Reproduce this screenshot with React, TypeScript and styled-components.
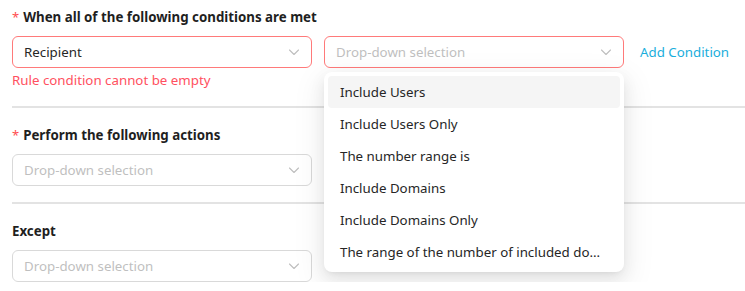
import React from "react";
import styled, { createGlobalStyle } from "styled-components";

const Global = createGlobalStyle`
  html, body { margin: 0; padding: 0; background: #fff; }
  body { font-family: "Noto Sans", "Open Sans", sans-serif; font-size: 13.3px; color: #262626; }
`;

const Page = styled.div`
  position: relative;
  padding: 6px 0 0 12px;
  width: 733px;
`;

const Section = styled.div`
  display: flex;
  flex-direction: column;
`;

const Title = styled.div`
  display: flex;
  align-items: center;
  gap: 4px;
  height: 22px;
  font-weight: 700;
  font-size: 13.3px;
  color: #1f1f1f;
  margin-bottom: 8px;
`;

const Star = styled.span`
  color: #ff4d4f;
  font-weight: 400;
  font-size: 13px;
`;

const Row = styled.div`
  display: flex;
  align-items: center;
  gap: 12px;
`;

const SelectBox = styled.div<{ $error?: boolean }>`
  box-sizing: border-box;
  width: 300px;
  height: 32px;
  border: 1px solid ${(p) => (p.$error ? "#ff7a7a" : "#d9d9d9")};
  border-radius: 6px;
  display: flex;
  align-items: center;
  justify-content: space-between;
  padding: 0 11px 0 11px;
  background: #fff;
`;

const Value = styled.span<{ $placeholder?: boolean }>`
  color: ${(p) => (p.$placeholder ? "#bfbfbf" : "#262626")};
`;

const AddLink = styled.span`
  margin-left: 4px;
  color: #1aaedc;
  white-space: nowrap;
`;

const ErrorText = styled.div`
  color: #ff5060;
  line-height: 24px;
  height: 22px;
`;

const Divider = styled.div`
  height: 2px;
  background: #e3e3e3;
  margin: 16px 0;
`;

const Menu = styled.div`
  position: absolute;
  left: 324px;
  top: 72px;
  width: 300px;
  box-sizing: border-box;
  padding: 4px;
  background: #fff;
  border-radius: 8px;
  box-shadow: 0 6px 16px 0 rgba(0, 0, 0, 0.08), 0 3px 6px -4px rgba(0, 0, 0, 0.12),
    0 9px 28px 8px rgba(0, 0, 0, 0.05);
`;

const Item = styled.div<{ $active?: boolean }>`
  height: 32px;
  line-height: 32px;
  padding: 0 12px;
  border-radius: 4px;
  background: ${(p) => (p.$active ? "#f5f5f5" : "transparent")};
  color: #262626;
  white-space: nowrap;
`;

const Chevron = () => (
  <svg width="12" height="12" viewBox="0 0 12 12" fill="none">
    <path d="M1.5 4 L6 8.5 L10.5 4" stroke="#bfbfbf" strokeWidth="1.1" strokeLinecap="round" strokeLinejoin="round" />
  </svg>
);

const Select = ({ value, placeholder, error }: { value?: string; placeholder?: string; error?: boolean }) => (
  <SelectBox $error={error}>
    <Value $placeholder={!value}>{value || placeholder}</Value>
    <Chevron />
  </SelectBox>
);

const items = [
  "Include Users",
  "Include Users Only",
  "The number range is",
  "Include Domains",
  "Include Domains Only",
  "The range of the number of included do...",
];

export default function App() {
  return (
    <>
      <Global />
      <Page>
        <Section>
          <Title>
            <Star>*</Star>When all of the following conditions are met
          </Title>
          <Row>
            <Select value="Recipient" error />
            <Select placeholder="Drop-down selection" error />
            <AddLink>Add Condition</AddLink>
          </Row>
          <ErrorText>Rule condition cannot be empty</ErrorText>
        </Section>
        <Divider />
        <Section>
          <Title>
            <Star>*</Star>Perform the following actions
          </Title>
          <Row>
            <Select placeholder="Drop-down selection" />
          </Row>
        </Section>
        <Divider />
        <Section>
          <Title>Except</Title>
          <Row>
            <Select placeholder="Drop-down selection" />
          </Row>
        </Section>
        <Menu>
          {items.map((t, i) => (
            <Item key={t} $active={i === 0}>
              {t}
            </Item>
          ))}
        </Menu>
      </Page>
    </>
  );
}
